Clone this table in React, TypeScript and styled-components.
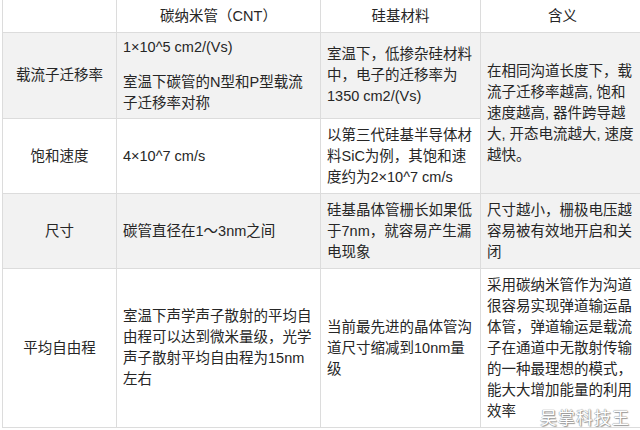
import React from 'react';
import styled, { createGlobalStyle } from 'styled-components';

const GlobalStyle = createGlobalStyle`
  html, body {
    margin: 0;
    padding: 0;
    background: #ffffff;
  }
  body {
    width: 640px;
    height: 430px;
    overflow: hidden;
  }
`;

const Page = styled.div`
  position: relative;
  width: 640px;
  height: 430px;
  overflow: hidden;
  background: #ffffff;
  font-family: 'Liberation Sans', 'Noto Sans CJK SC', sans-serif;
  color: #262626;
`;

const Table = styled.table`
  border-collapse: collapse;
  table-layout: fixed;
  width: 642px;
  margin: -1px 0 0 2px;
  font-size: 14.5px;
  line-height: 21px;
`;

const Row = styled.tr<{ $shaded?: boolean; $height: number }>`
  height: ${({ $height }) => $height}px;
  background: ${({ $shaded }) => ($shaded ? '#f2f2f2' : '#ffffff')};
`;

const Cell = styled.td<{ $center?: boolean; $shaded?: boolean }>`
  border: 1px solid #dcdcdc;
  padding: 4px 6px;
  vertical-align: middle;
  text-align: ${({ $center }) => ($center ? 'center' : 'left')};
  background: ${({ $shaded }) => ($shaded ? '#f2f2f2' : 'inherit')};
  word-break: normal;
`;

const HeadCell = styled(Cell).attrs({ as: 'th' })`
  font-weight: 400;
  text-align: center;
`;

const Para = styled.p`
  margin: 0;
  & + & {
    margin-top: 14px;
  }
`;

const Watermark = styled.div`
  position: absolute;
  right: 10px;
  bottom: 5px;
  font-family: 'Noto Sans CJK SC', sans-serif;
  font-size: 17px;
  line-height: 17px;
  letter-spacing: 1px;
  color: #ffffff;
  text-shadow: 0 0 1px #8a8a8a, 0 0 1px #8a8a8a, 1px 1px 1px #9a9a9a;
  pointer-events: none;
`;

export default function App() {
  return (
    <Page>
      <GlobalStyle />
      <Table>
        <colgroup>
          <col style={{ width: 114 }} />
          <col style={{ width: 204 }} />
          <col style={{ width: 160 }} />
          <col style={{ width: 164 }} />
        </colgroup>
        <thead>
          <Row $height={33}>
            <HeadCell />
            <HeadCell>碳纳米管（CNT）</HeadCell>
            <HeadCell>硅基材料</HeadCell>
            <HeadCell>含义</HeadCell>
          </Row>
        </thead>
        <tbody>
          <Row $shaded $height={85}>
            <Cell $center>载流子迁移率</Cell>
            <Cell>
              <Para>1×10^5 cm2/(Vs)</Para>
              <Para>室温下碳管的N型和P型载流子迁移率对称</Para>
            </Cell>
            <Cell>室温下，低掺杂硅材料中，电子的迁移率为1350 cm2/(Vs)</Cell>
            <Cell rowSpan={2} $shaded>
              在相同沟道长度下，载流子迁移率越高, 饱和速度越高, 器件跨导越大, 开态电流越大, 速度越快。
            </Cell>
          </Row>
          <Row $height={75}>
            <Cell $center>饱和速度</Cell>
            <Cell>4×10^7 cm/s</Cell>
            <Cell>以第三代硅基半导体材料SiC为例，其饱和速度约为2×10^7 cm/s</Cell>
          </Row>
          <Row $shaded $height={75}>
            <Cell $center>尺寸</Cell>
            <Cell>碳管直径在1～3nm之间</Cell>
            <Cell>硅基晶体管栅长如果低于7nm，就容易产生漏电现象</Cell>
            <Cell>尺寸越小，栅极电压越容易被有效地开启和关闭</Cell>
          </Row>
          <Row $height={159}>
            <Cell $center>平均自由程</Cell>
            <Cell>室温下声学声子散射的平均自由程可以达到微米量级，光学声子散射平均自由程为15nm左右</Cell>
            <Cell>当前最先进的晶体管沟道尺寸缩减到10nm量级</Cell>
            <Cell>
              采用碳纳米管作为沟道很容易实现弹道输运晶体管，弹道输运是载流子在通道中无散射传输的一种最理想的模式，能大大增加能量的利用效率
            </Cell>
          </Row>
        </tbody>
      </Table>
      <Watermark>吴掌科技王</Watermark>
    </Page>
  );
}
